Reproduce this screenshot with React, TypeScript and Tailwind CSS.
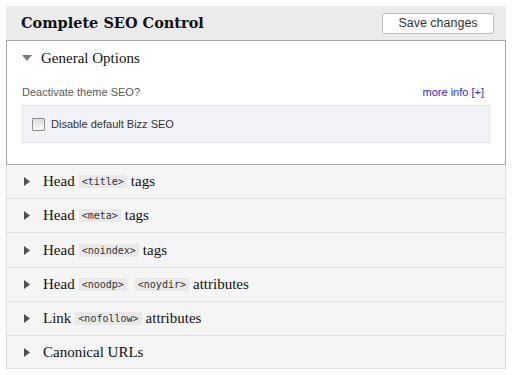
import React from "react";

const serif = { fontFamily: '"Liberation Serif", Georgia, serif' };
const serifBold = { fontFamily: '"DejaVu Serif", Georgia, serif' };
const sans = { fontFamily: '"Liberation Sans", Tahoma, sans-serif' };
const mono = { fontFamily: '"DejaVu Sans Mono", monospace' };

function Code({ children }: { children: React.ReactNode }) {
  return (
    <code className="bg-[#e9e9e9] px-[3px] leading-[13px] text-[10px] text-[#333] mx-[4px]" style={mono}>
      {children}
    </code>
  );
}

function RightTri() {
  return (
    <svg width="6" height="9" viewBox="0 0 6 9" className="shrink-0">
      <polygon points="0,0 6,4.5 0,9" fill="#505050" />
    </svg>
  );
}

function Row({ children, h, last }: { children: React.ReactNode; h: string; last?: boolean }) {
  return (
    <div className={"flex items-center pl-[17px] gap-[13px] bg-[#f5f5f5] border-x border-[#dedede] " + h + (last ? " border-b" : " border-b border-[#e2e2e2]")}>
      <RightTri />
      <div className="text-[15px] text-[#111] flex items-center" style={serif}>{children}</div>
    </div>
  );
}

export default function App() {
  return (
    <div className="w-[513px] h-[375px] bg-white pt-[6px] px-[6px]">
      <div className="w-[500px]">
        <div className="h-[34px] bg-[#ebebeb] flex items-center justify-between pl-[15px] pr-[12px]">
          <div className="text-[14.5px] font-bold text-[#111]" style={serifBold}>Complete SEO Control</div>
          <button className="w-[112px] h-[21px] bg-white border border-[#bdbdbd] rounded-[3px] text-[12.5px] text-[#333]" style={sans}>
            Save changes
          </button>
        </div>
        <div className="border border-[#a8a8a8] bg-white h-[125px]">
          <div className="flex items-center h-[34px] pl-[15px] gap-[9px]">
            <svg width="10" height="6" viewBox="0 0 10 6"><polygon points="0,0 10,0 5,6" fill="#7a7a7a" /></svg>
            <div className="text-[15px] text-[#111]" style={serif}>General Options</div>
          </div>
          <div className="px-[15px]">
            <div className="flex justify-between items-center h-[30px] pt-[4px] text-[11px]" style={sans}>
              <span className="text-[#5a5a5a]">Deactivate theme SEO?</span>
              <span className="text-[#2a2ae0] pr-[6px]">more info [+]</span>
            </div>
            <div className="h-[38px] bg-[#f2f3f7] border border-[#e4e5ea] flex items-center pl-[9px] gap-[6px] text-[11px] text-[#333]" style={sans}>
              <span className="w-[13px] h-[13px] border border-[#8f8f8f] bg-[linear-gradient(#dcdcdc,#fafafa)] rounded-[1px]" />
              <span>Disable default Bizz SEO</span>
            </div>
          </div>
        </div>
        <Row h="h-[34px]">Head <Code>&lt;title&gt;</Code> tags</Row>
        <Row h="h-[34px]">Head <Code>&lt;meta&gt;</Code> tags</Row>
        <Row h="h-[35px]">Head <Code>&lt;noindex&gt;</Code> tags</Row>
        <Row h="h-[34px]">Head <Code>&lt;noodp&gt;</Code> <Code>&lt;noydir&gt;</Code> attributes</Row>
        <Row h="h-[34px]">Link <Code>&lt;nofollow&gt;</Code> attributes</Row>
        <Row h="h-[33px]" last>Canonical URLs</Row>
      </div>
    </div>
  );
}
